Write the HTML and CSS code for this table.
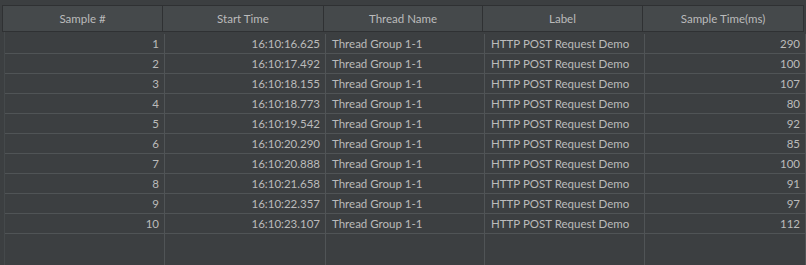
FILE: index.html
```html
<!DOCTYPE html>
<html>
<head>
<meta charset="utf-8">
<link rel="stylesheet" href="styles.css">
</head>
<body>
<div class="panel">
  <div class="head">
    <div class="hc">Sample #</div>
    <div class="hc">Start Time</div>
    <div class="hc">Thread Name</div>
    <div class="hc">Label</div>
    <div class="hc">Sample Time(ms)</div>
  </div>
  <div class="body">
    <div class="row"><div class="c r">1</div><div class="c r">16:10:16.625</div><div class="c">Thread Group 1-1</div><div class="c">HTTP POST Request Demo</div><div class="c r">290</div></div>
    <div class="row"><div class="c r">2</div><div class="c r">16:10:17.492</div><div class="c">Thread Group 1-1</div><div class="c">HTTP POST Request Demo</div><div class="c r">100</div></div>
    <div class="row"><div class="c r">3</div><div class="c r">16:10:18.155</div><div class="c">Thread Group 1-1</div><div class="c">HTTP POST Request Demo</div><div class="c r">107</div></div>
    <div class="row"><div class="c r">4</div><div class="c r">16:10:18.773</div><div class="c">Thread Group 1-1</div><div class="c">HTTP POST Request Demo</div><div class="c r">80</div></div>
    <div class="row"><div class="c r">5</div><div class="c r">16:10:19.542</div><div class="c">Thread Group 1-1</div><div class="c">HTTP POST Request Demo</div><div class="c r">92</div></div>
    <div class="row"><div class="c r">6</div><div class="c r">16:10:20.290</div><div class="c">Thread Group 1-1</div><div class="c">HTTP POST Request Demo</div><div class="c r">85</div></div>
    <div class="row"><div class="c r">7</div><div class="c r">16:10:20.888</div><div class="c">Thread Group 1-1</div><div class="c">HTTP POST Request Demo</div><div class="c r">100</div></div>
    <div class="row"><div class="c r">8</div><div class="c r">16:10:21.658</div><div class="c">Thread Group 1-1</div><div class="c">HTTP POST Request Demo</div><div class="c r">91</div></div>
    <div class="row"><div class="c r">9</div><div class="c r">16:10:22.357</div><div class="c">Thread Group 1-1</div><div class="c">HTTP POST Request Demo</div><div class="c r">97</div></div>
    <div class="row"><div class="c r">10</div><div class="c r">16:10:23.107</div><div class="c">Thread Group 1-1</div><div class="c">HTTP POST Request Demo</div><div class="c r">112</div></div>
    <div class="row filler"><div class="c"></div><div class="c"></div><div class="c"></div><div class="c"></div><div class="c"></div></div>
  </div>
</div>
</body>
</html>
```
FILE: styles.css
```css
html, body {
  margin: 0;
  padding: 0;
  background: #3c3f41;
  height: 265px;
  overflow: hidden;
}
.panel {
  padding-top: 5px;
  padding-left: 2px;
  font-family: "Lato", "Liberation Sans", sans-serif;
  font-size: 11.5px;
  color: #bbbbbb;
  height: 260px;
  display: flex;
  flex-direction: column;
}
.head {
  display: grid;
  grid-template-columns: 160px 161px 159px 160px 161px;
  width: 801px;
  border-top: 1px solid #2f3133;
  border-bottom: 1px solid #2f3133;
  border-left: 1px solid #2f3133;
  background: #45494b;
  height: 25px;
}
.hc {
  border-right: 1px solid #2f3133;
  display: flex;
  align-items: center;
  justify-content: center;
  line-height: 25px;
}
.body {
  margin-left: 2px;
  padding-top: 2px;
  flex: 1;
  display: flex;
  flex-direction: column;
  border-left: 1px solid #45494b;
}
.row {
  display: grid;
  grid-template-columns: 160px 161px 159px 160px 161px;
  width: 801px;
  height: 19px;
  border-bottom: 1px solid #505456;
}
.row.filler {
  flex: 1;
  border-bottom: none;
}
.c {
  border-right: 1px solid #505456;
  padding: 0 5px 0 6px;
  line-height: 19px;
  white-space: nowrap;
}
.c.r {
  text-align: right;
}
```
